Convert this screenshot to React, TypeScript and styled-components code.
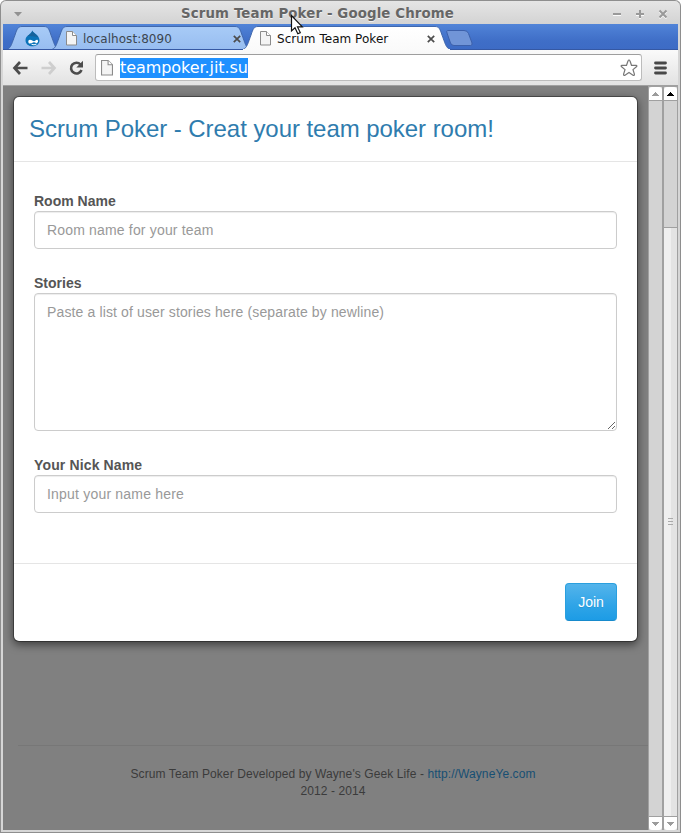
import React from "react";
import styled, { createGlobalStyle } from "styled-components";

const GlobalStyle = createGlobalStyle`
  *, *::before, *::after { box-sizing: border-box; }
  html, body { margin: 0; padding: 0; overflow: hidden; background: #fff; }
  svg { display: block; flex: none; }
`;

const Window = styled.div`
  position: relative;
  display: flex;
  flex-direction: column;
  width: 681px;
  height: 833px;
  padding: 0 2px 2px;
  border: 1px solid #8e8e8e;
  border-top: 0;
  border-radius: 6px 6px 0 0;
  background: #d6d6d6;
  overflow: hidden;
  font-family: "DejaVu Sans", sans-serif;
`;

const TitleBar = styled.header`
  display: flex;
  flex: none;
  align-items: center;
  height: 24px;
  margin: 0 -3px;
  padding: 3px 12px 0 13px;
  border: 1px solid #8e8e8e;
  border-bottom: 0;
  border-radius: 6px 6px 0 0;
  background: linear-gradient(#e5e5e5, #d3d3d3);
`;

const WindowTitle = styled.h1`
  flex: 1;
  margin: 0 0 0 1px;
  color: #666;
  font-size: 13.33px;
  font-weight: bold;
  letter-spacing: 0.13px;
  line-height: 18px;
  text-align: center;
  white-space: nowrap;
  text-shadow: 0 1px #f2f2f2;
`;

const WindowControls = styled.div`
  display: flex;
  gap: 13px;
`;

const TabStrip = styled.nav`
  display: flex;
  flex: none;
  height: 26px;
  padding: 1px 0 0 4px;
  background: linear-gradient(#5184d8, #3f6ec7 65%, #3d6bc5);
  box-shadow: inset 0 -1px #3558a3;
`;

const TabBox = styled.div<{ $width: number; $active?: boolean }>`
  position: relative;
  z-index: ${(p) => (p.$active ? 2 : 1)};
  display: flex;
  flex: none;
  align-items: center;
  width: ${(p) => p.$width}px;
  height: 25px;
  padding: ${(p) => (p.$active ? "2px 15px 0 17px" : "2px 9px 0 14px")};
  margin-right: ${(p) => (p.$active ? -6 : -7)}px;
  color: ${(p) => (p.$active ? "#111" : "#3c4650")};
  font-size: 12px;
  white-space: nowrap;
`;

const TabShape = styled.svg`
  position: absolute;
  top: 0;
  left: 0;
  z-index: -1;
`;

const TabLabel = styled.span`
  flex: 1;
  margin-left: 6px;
  letter-spacing: 0.03px;
`;

const PinnedIcon = styled.div`
  margin: -1px 0 0 4px;
`;

const Toolbar = styled.div`
  display: flex;
  flex: none;
  align-items: center;
  height: 36px;
  padding: 0 11px 0 9px;
  border-bottom: 1px solid #a0a0a0;
  background: linear-gradient(#fafafa, #e2e2e2);
`;

const NavButtons = styled.div`
  display: flex;
  gap: 11px;
`;

const AddressBar = styled.div`
  display: flex;
  flex: 1;
  align-items: center;
  height: 27px;
  margin: 0 12px 0 10px;
  padding: 0 3px 0 5px;
  border: 1px solid #bcbcbc;
  border-top-color: #9e9e9e;
  border-radius: 3px;
  background: #fff;
`;

const Url = styled.span`
  height: 20px;
  margin: 0 auto 0 7px;
  background: #1e90ff;
  color: #fff;
  font-size: 16px;
  letter-spacing: -0.06px;
  line-height: 20px;
`;

const Content = styled.div`
  display: flex;
  flex: 1;
  min-height: 0;
  background: #808080;
`;

const Page = styled.main`
  display: flex;
  flex: 1;
  flex-direction: column;
  min-width: 0;
  overflow: hidden;
  font-family: "Liberation Sans", Arial, sans-serif;
`;

const Modal = styled.form`
  flex: none;
  width: 625px;
  margin: 10px 0 0 10px;
  border: 1px solid rgba(0, 0, 0, 0.35);
  border-radius: 6px;
  background: #fff;
  background-clip: padding-box;
  box-shadow: 0 3px 9px rgba(0, 0, 0, 0.5);
`;

const ModalHeader = styled.div`
  height: 65px;
  padding: 15px;
  border-bottom: 1px solid #e5e5e5;
`;

const ModalTitle = styled.h2`
  margin: 0;
  color: #2f7cae;
  font-size: 24px;
  font-weight: normal;
  letter-spacing: -0.05px;
  line-height: 34px;
`;

const ModalBody = styled.div`
  display: flex;
  flex-direction: column;
  gap: 24px;
  height: 401px;
  padding: 29px 20px 0;
`;

const Field = styled.label<{ $spacing?: number }>`
  display: flex;
  flex-direction: column;
  color: #555;
  font-size: 14px;
  font-weight: bold;
  letter-spacing: ${(p) => p.$spacing ?? 0}px;
  line-height: 20px;
`;

const TextInput = styled.input<{ $height?: number; $spacing: number }>`
  width: 100%;
  height: ${(p) => p.$height ?? 38}px;
  padding: 8px 12px;
  border: 1px solid #ccc;
  border-radius: 4px;
  outline: 0;
  background: #fff;
  box-shadow: inset 0 1px 1px rgba(0, 0, 0, 0.075);
  color: #555;
  font: 14px/20px "Liberation Sans", Arial, sans-serif;
  letter-spacing: ${(p) => p.$spacing}px;
  resize: vertical;

  &::placeholder { color: #999; opacity: 1; }
`;

const ModalFooter = styled.div`
  display: flex;
  justify-content: flex-end;
  height: 78px;
  padding: 19px 20px 20px;
  border-top: 1px solid #e5e5e5;
`;

const JoinButton = styled.button`
  width: 52px;
  height: 38px;
  padding: 0;
  border: 1px solid #2a9fde;
  border-bottom-color: #178acc;
  border-radius: 4px;
  background: linear-gradient(#54b4eb, #2fa4e7 60%, #1d9ce5);
  color: #fff;
  font: 14px/20px "Liberation Sans", Arial, sans-serif;
  text-shadow: 0 1px 0 rgba(0, 0, 0, 0.1);
`;

const PageFooter = styled.footer`
  margin: 103px 0 0 15px;
  padding: 20px 0 0;
  border-top: 1px solid #777;
  color: #3b3b3b;
  font-size: 12px;
  letter-spacing: 0.09px;
  line-height: 17px;
  text-align: center;
`;

const FooterLink = styled.a`
  color: #174f73;
  text-decoration: none;
`;

const Bar = styled.div`
  display: flex;
  flex: none;
  flex-direction: column;
  width: 15px;
  border: solid #a0a0a0;
  border-width: 1px 1px 0;
  background: #d3d3d3;
`;

const ArrowBox = styled.div<{ $down?: boolean }>`
  display: flex;
  flex: none;
  align-items: center;
  justify-content: center;
  height: 14px;
  border: solid #a0a0a0;
  border-width: ${(p) => (p.$down ? "1px 0 0" : "0 0 1px")};
  border-radius: ${(p) => (p.$down ? "0 0 3px 3px" : "3px 3px 0 0")};
  background: #fff;
`;

const Track = styled.div<{ $offset: number }>`
  display: flex;
  flex: 1;
  padding-top: ${(p) => p.$offset}px;
`;

const Thumb = styled.div`
  display: flex;
  flex: 1;
  align-items: center;
  justify-content: center;
  padding-bottom: 2px;
  border-top: 1px solid #a0a0a0;
  background: linear-gradient(90deg, #efefef 54%, #e3e3e3 54%);
`;

const Pointer = styled.svg`
  position: absolute;
  top: 14px;
  left: 289px;
  z-index: 5;
`;

function Tab({ width, active, children }: { width: number; active?: boolean; children: React.ReactNode }) {
  const w = width;
  const outline = `M0 24.500 C4 23 5 18 8 10 C10 4 11 1.500 15 1.500 H${w - 15} C${w - 11} 1.500 ${w - 10} 4 ${w - 8} 10 C${w - 5} 18 ${w - 4} 23 ${w} 24.500`;
  const fill = active ? "url(#activeTab)" : "url(#idleTab)";
  return (
    <TabBox $width={width} $active={active}>
      <TabShape width={width} height={active ? 25 : 24}>
        <defs>
          <linearGradient id="activeTab" x2="0" y2="1">
            <stop stopColor="#fff" />
            <stop offset="1" stopColor="#fafafa" />
          </linearGradient>
          <linearGradient id="idleTab" x2="0" y2="1">
            <stop stopColor="#a8cbf7" />
            <stop offset="1" stopColor="#97bdf0" />
          </linearGradient>
        </defs>
        <path d={outline} fill={fill} stroke="#4168ac" strokeWidth="1" />
        {active && <path d={`M0 24.500H${w}`} stroke="#fafafa" />}
      </TabShape>
      {children}
    </TabBox>
  );
}

const DocIcon = ({ large }: { large?: boolean }) => (
  <svg width={large ? 12 : 11} height={large ? 16 : 15} viewBox="0 0 11 15" preserveAspectRatio="none">
    <path d="M.5.5h6l4 4v9.500H.5z" fill="#f4f4f4" stroke="#8b8b8b" />
    <path d="M6.500.5v4h4" fill="#fff" stroke="#8b8b8b" />
  </svg>
);

const CloseIcon = () => (
  <svg width="8" height="8" viewBox="0 0 8 8">
    <path d="M.8.8l6.400 6.400M7.200.8L.8 7.200" stroke="#4d4d4d" strokeWidth="1.700" />
  </svg>
);

const DropIcon = () => (
  <svg width="15" height="17" viewBox="0 0 15 17">
    <path d="M7.200.5C8 3 14.500 5 14.500 10.300C14.500 14 11.500 16.300 7.500 16.300S.5 14 .5 10C.5 5.500 6.800 4 7.200.5z" fill="#0b73b9" />
    <path d="M7.200.5C7.800 3 12 4.500 13.700 7.500C10 6 5 6.500 2.500 6C5 4.500 7 3 7.200.5z" fill="#17629b" />
    <path d="M4.900 9.800C7 9.800 7.800 11.300 9 11.300S10.700 9.800 12 9.800S13.500 12.500 12 12.900S9.800 12.300 8.700 12.300S6.700 13.600 4.800 13.600S2.700 9.800 4.900 9.800z" fill="#fff" />
    <path d="M6.500 14.200Q9 15.600 11.500 14" fill="none" stroke="#fff" />
  </svg>
);

const ScrollArrow = ({ down, color = "#9c9c9c" }: { down?: boolean; color?: string }) => (
  <svg width="7" height="4" viewBox="0 0 7 4" shapeRendering="crispEdges">
    <path d={down ? "M0 0h7v1H6v1H5v1H4v1H3V3H2V2H1V1H0z" : "M3 0h1v1h1v1h1v1h1v1H0V3h1V2h1V1h1z"} fill={color} />
  </svg>
);

const ControlIcon = ({ d }: { d: string }) => (
  <svg width="10" height="10" viewBox="0 0 10 10">
    <path d={d} transform="translate(0 1)" stroke="#fafafa" strokeWidth="2" fill="none" />
    <path d={d} stroke="#999" strokeWidth="2" fill="none" />
  </svg>
);

export default function App() {
  return (
    <Window>
      <GlobalStyle />
      <TitleBar>
        <svg width="8" height="5" viewBox="0 0 8 5"><path d="M0 0h8L4 4.500z" fill="#929292" /></svg>
        <WindowTitle>Scrum Team Poker - Google Chrome</WindowTitle>
        <WindowControls>
          <ControlIcon d="M1 5h8" />
          <ControlIcon d="M1 5h8M5 1v8" />
          <ControlIcon d="M1.500 1.500l7 7M8.500 1.500l-7 7" />
        </WindowControls>
      </TitleBar>

      <TabStrip>
        <Tab width={52}>
          <PinnedIcon><DropIcon /></PinnedIcon>
        </Tab>
        <Tab width={198}>
          <DocIcon />
          <TabLabel>localhost:8090</TabLabel>
          <CloseIcon />
        </Tab>
        <Tab width={207} active>
          <DocIcon />
          <TabLabel>Scrum Team Poker</TabLabel>
          <CloseIcon />
        </Tab>
        <svg width="30" height="24" viewBox="0 0 30 24">
          <path d="M3.500 5.500H20Q23.500 5.500 24.500 8.500L28 18Q28.500 20.500 26.500 20.500H10Q7.500 20.500 6.500 18L3 8Q2.300 5.500 3.500 5.500z" fill="#7195d7" stroke="#3c60aa" />
        </svg>
      </TabStrip>

      <Toolbar>
        <NavButtons>
          <svg width="17" height="16" viewBox="0 0 17 16"><path d="M8 2L2.500 8L8 14M3 8h12.500" fill="none" stroke="#4c4c4c" strokeWidth="2.700" /></svg>
          <svg width="17" height="16" viewBox="0 0 17 16"><path d="M9 2l5.500 6L9 14M14 8H1.500" fill="none" stroke="#cecece" strokeWidth="2.700" /></svg>
          <svg width="17" height="16" viewBox="0 0 17 16">
            <path d="M12.500 4.500A5.400 5.400 0 1 0 13.500 10" fill="none" stroke="#4c4c4c" strokeWidth="2.600" />
            <path d="M15 .8V7.500H8.300z" fill="#4c4c4c" />
          </svg>
        </NavButtons>
        <AddressBar>
          <DocIcon large />
          <Url>teampoker.jit.su</Url>
          <svg width="18" height="18" viewBox="0 0 18 18">
            <path d="M9 1Q9.700 1 10 2L11.500 6.300L16 6.400Q17.600 6.600 16.400 7.800L13 10.600L14.400 15Q14.600 17 13 16.200L9 13.500L5 16.200Q3.400 17 3.600 15L5 10.600L1.600 7.800Q.4 6.600 2 6.400L6.500 6.300L8 2Q8.300 1 9 1z" fill="#fff" stroke="#777" strokeWidth="1.200" />
          </svg>
        </AddressBar>
        <svg width="13" height="14" viewBox="0 0 13 14"><path d="M1.500 2h10M1.500 7h10M1.500 12h10" stroke="#484848" strokeWidth="2.800" strokeLinecap="round" /></svg>
      </Toolbar>

      <Content>
        <Page>
          <Modal>
            <ModalHeader>
              <ModalTitle>Scrum Poker - Creat your team poker room!</ModalTitle>
            </ModalHeader>
            <ModalBody>
              <Field>
                Room Name
                <TextInput $spacing={0.17} placeholder="Room name for your team" />
              </Field>
              <Field>
                Stories
                <TextInput as="textarea" $height={138} $spacing={0.13} placeholder="Paste a list of user stories here (separate by newline)" />
              </Field>
              <Field $spacing={0.14}>
                Your Nick Name
                <TextInput $spacing={0.2} placeholder="Input your name here" />
              </Field>
            </ModalBody>
            <ModalFooter>
              <JoinButton type="button">Join</JoinButton>
            </ModalFooter>
          </Modal>
          <PageFooter>
            Scrum Team Poker Developed by Wayne's Geek Life - <FooterLink href="#">http://WayneYe.com</FooterLink>
            <br />
            2012 - 2014
          </PageFooter>
        </Page>
        <Bar>
          <ArrowBox><ScrollArrow /></ArrowBox>
          <Track $offset={0} />
          <ArrowBox $down><ScrollArrow down /></ArrowBox>
        </Bar>
        <Bar>
          <ArrowBox><ScrollArrow color="#000" /></ArrowBox>
          <Track $offset={126}>
            <Thumb>
              <svg width="5" height="7" viewBox="0 0 5 7"><path d="M0 .5h5M0 3.500h5M0 6.500h5" stroke="#aaa" /></svg>
            </Thumb>
          </Track>
          <ArrowBox $down><ScrollArrow down /></ArrowBox>
        </Bar>
      </Content>

      <Pointer width="14" height="22" viewBox="0 0 14 22">
        <path d="M1.500 1.500V17L5 13.800L7.800 19.800L10.300 18.600L7.500 12.900H12.300z" fill="#fff" stroke="#111" strokeWidth="1.200" />
      </Pointer>
    </Window>
  );
}
